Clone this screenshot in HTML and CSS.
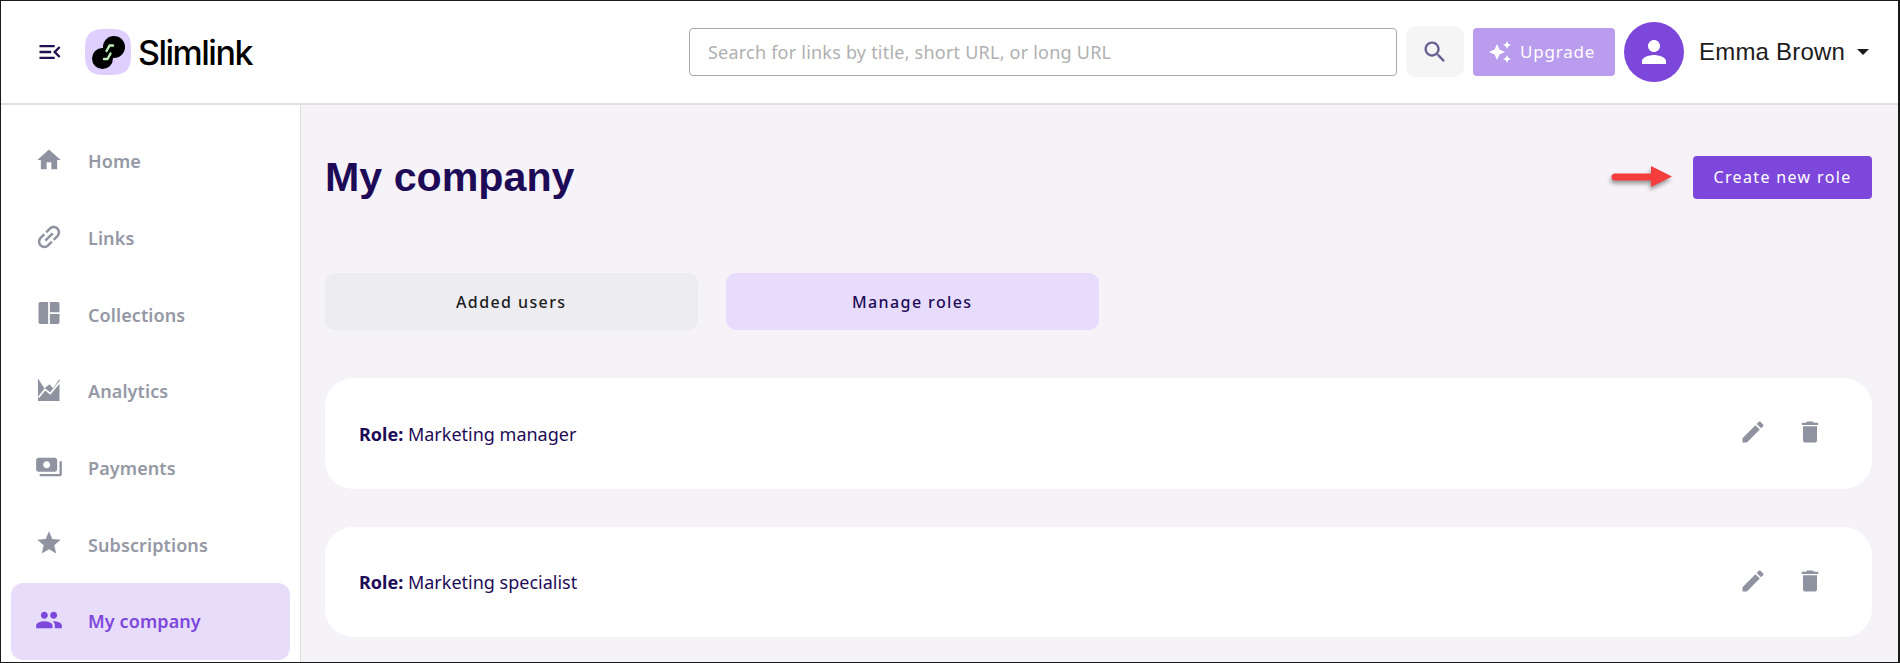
FILE: index.html
```html
<!DOCTYPE html>
<html lang="en">
<head>
<meta charset="utf-8">
<title>Slimlink - My company</title>
<link rel="stylesheet" href="styles.css">
</head>
<body>
<div class="frame">
  <header class="topbar">
    <svg class="menu-icon" viewBox="0 0 24 24"><path d="M3 18h13v-2H3v2zm0-5h10v-2H3v2zm0-7v2h13V6H3zm18 9.590L17.420 12 21 8.410 19.590 7l-5 5 5 5L21 15.590z"/></svg>
    <svg class="logo-mark" viewBox="0 0 46 46">
      <path class="logo-bg" d="M13 0.500C19 -0.500 27 -0.500 33 0.500C40 1.500 45 6 45.500 13C46.200 19 46.200 27 45.500 33C44.500 40 40 44.500 33 45.500C27 46.200 19 46.200 13 45.500C6 44.500 1.500 40 0.500 33C-0.200 27 -0.200 19 0.500 13C1.500 6 6 1.500 13 0.500Z"/>
      <circle class="logo-link" cx="17.500" cy="29.500" r="10.500"/>
      <circle class="logo-link" cx="29" cy="18" r="11"/>
      <path class="logo-s" d="M28 16.500H24.500L21.500 22 M19 30H22.500L25.500 24.500"/>
    </svg>
    <span class="logo-text">Slimlink</span>
    <div class="search-area">
      <div class="search-input">Search for links by title, short URL, or long URL</div>
      <button class="search-btn"><svg viewBox="0 0 24 24"><path d="M15.500 14h-.79l-.28-.27C15.410 12.590 16 11.110 16 9.500 16 5.910 13.090 3 9.500 3S3 5.910 3 9.500 5.910 16 9.500 16c1.610 0 3.090-.59 4.230-1.570l.27.28v.79l5 4.990L20.490 19l-4.990-5zm-6 0C7.010 14 5 11.990 5 9.500S7.010 5 9.500 5 14 7.010 14 9.500 11.990 14 9.500 14z"/></svg></button>
    </div>
    <button class="upgrade-btn"><svg viewBox="0 0 24 24"><path d="M19 9l1.250-2.750L23 5l-2.750-1.250L19 1l-1.250 2.750L15 5l2.750 1.250L19 9zm-7.500.5L9 4 6.500 9.500 1 12l5.500 2.500L9 20l2.500-5.500L17 12l-5.500-2.500zM19 15l-1.250 2.750L15 19l2.750 1.250L19 23l1.250-2.750L23 19l-2.750-1.250L19 15z"/></svg>Upgrade</button>
    <div class="avatar"><svg viewBox="0 0 24 24"><path d="M12 12c2.210 0 4-1.790 4-4s-1.790-4-4-4-4 1.790-4 4 1.790 4 4 4zm0 2c-2.670 0-8 1.340-8 4v2h16v-2c0-2.660-5.330-4-8-4z"/></svg></div>
    <span class="user-name">Emma Brown</span>
    <span class="caret"></span>
  </header>
  <div class="body-row">
    <nav class="sidebar">
      <a class="nav-item"><svg viewBox="0 0 24 24"><path d="M10 20v-6h4v6h5v-8h3L12 3 2 12h3v8z"/></svg>Home</a>
      <a class="nav-item"><svg viewBox="0 0 24 24"><g transform="translate(12 12) scale(1.120) rotate(-45) translate(-12 -12)"><path d="M3.900 12c0-1.710 1.390-3.100 3.100-3.100h4V7H7c-2.760 0-5 2.240-5 5s2.240 5 5 5h4v-1.900H7c-1.710 0-3.100-1.390-3.100-3.100zM8 13h8v-2H8v2zm9-6h-4v1.900h4c1.710 0 3.100 1.390 3.100 3.100s-1.390 3.100-3.100 3.100h-4V17h4c2.760 0 5-2.240 5-5s-2.240-5-5-5z"/></g></svg>Links</a>
      <a class="nav-item"><svg viewBox="0 0 24 24"><path d="M4.500 2.500H11.250V21.500H4.500A1.500 1.500 0 0 1 3 20V4A1.500 1.500 0 0 1 4.500 2.500zM12.750 2.500h6.750A1.500 1.500 0 0 1 21 4V11.250H12.750zM12.750 12.750H21V20A1.500 1.500 0 0 1 19.500 21.500H12.750z"/></svg>Collections</a>
      <a class="nav-item"><svg viewBox="0 0 24 24"><path d="M2.500 21.500V2l5.500 8.500 4.500-3.500 3 3.500L21 2.500V21.500z"/><path class="chart-gap" d="M3 18.500 8.500 11.500 13 15 21 5.500"/></svg>Analytics</a>
      <a class="nav-item"><svg viewBox="0 0 24 24"><path d="M19 14V6c0-1.100-.9-2-2-2H3c-1.100 0-2 .9-2 2v8c0 1.100.9 2 2 2h14c1.100 0 2-.9 2-2zm-9-1c-1.660 0-3-1.340-3-3s1.340-3 3-3 3 1.340 3 3-1.340 3-3 3zm13-6v11c0 1.100-.9 2-2 2H4v-2h17V7h2z"/></svg>Payments</a>
      <a class="nav-item"><svg viewBox="0 0 24 24"><path d="M12 17.270L18.180 21l-1.640-7.030L22 9.240l-7.190-.61L12 2 9.190 8.630 2 9.240l5.460 4.730L5.820 21z"/></svg>Subscriptions</a>
      <a class="nav-item active"><svg viewBox="0 0 24 24"><path d="M16 11c1.660 0 2.990-1.340 2.990-3S17.660 5 16 5c-1.660 0-3 1.340-3 3s1.340 3 3 3zm-8 0c1.660 0 2.990-1.340 2.990-3S9.660 5 8 5C6.340 5 5 6.340 5 8s1.340 3 3 3zm0 2c-2.330 0-7 1.170-7 3.500V19h14v-2.500c0-2.330-4.670-3.500-7-3.500zm8 0c-.29 0-.62.02-.97.05 1.160.84 1.970 1.970 1.970 3.450V19h6v-2.500c0-2.330-4.670-3.500-7-3.500z"/></svg>My company</a>
    </nav>
    <main class="content">
      <div class="title-row">
        <h1>My company</h1>
        <div class="title-actions">
          <svg class="arrow" viewBox="0 0 64 32"><path d="M5 12.500H41V5L62 15.500 41 26V19.500H5a3.500 3.500 0 0 1 0-7z"/></svg>
          <button class="create-btn">Create new role</button>
        </div>
      </div>
      <div class="tabs">
        <div class="tab">Added users</div>
        <div class="tab selected">Manage roles</div>
      </div>
      <section class="role-card">
        <p><strong>Role:</strong> Marketing manager</p>
        <div class="role-actions">
          <svg viewBox="0 0 24 24"><path d="M3 17.250V21h3.750L17.810 9.940l-3.750-3.750L3 17.250zM20.710 7.040c.39-.39.39-1.020 0-1.410l-2.340-2.340c-.39-.39-1.020-.39-1.410 0l-1.830 1.830 3.750 3.750 1.830-1.830z"/></svg>
          <svg viewBox="0 0 24 24"><path d="M6 19c0 1.100.9 2 2 2h8c1.100 0 2-.9 2-2V7H6v12zM19 4h-3.500l-1-1h-5l-1 1H5v2h14V4z"/></svg>
        </div>
      </section>
      <section class="role-card">
        <p><strong>Role:</strong> Marketing specialist</p>
        <div class="role-actions">
          <svg viewBox="0 0 24 24"><path d="M3 17.250V21h3.750L17.810 9.940l-3.750-3.750L3 17.250zM20.710 7.040c.39-.39.39-1.020 0-1.410l-2.340-2.340c-.39-.39-1.020-.39-1.410 0l-1.830 1.830 3.750 3.750 1.830-1.830z"/></svg>
          <svg viewBox="0 0 24 24"><path d="M6 19c0 1.100.9 2 2 2h8c1.100 0 2-.9 2-2V7H6v12zM19 4h-3.500l-1-1h-5l-1 1H5v2h14V4z"/></svg>
        </div>
      </section>
    </main>
  </div>
</div>
</body>
</html>
```
FILE: styles.css
```css
* { box-sizing: border-box; }
html, body { margin: 0; height: 100%; overflow: hidden; background: #1a1a1a; }
body { font-family: "Noto Sans", "Open Sans", sans-serif; }
button { font-family: inherit; border: 0; padding: 0; }

.frame {
  width: 1897px;
  height: 661px;
  margin: 1px 0 0 1px;
  display: flex;
  flex-direction: column;
  background: #f5f3f7;
  overflow: hidden;
}

.topbar {
  height: 104px;
  flex: none;
  display: flex;
  align-items: center;
  background: #fff;
  border-bottom: 2px solid #dfdfdf;
  padding: 0 0 1px 35px;
}
.menu-icon { width: 28px; height: 28px; fill: #21104f; flex: none; margin-right: 21px; }
.logo-mark { width: 46px; height: 46px; flex: none; margin-right: 7px; }
.logo-bg { fill: #dfcfff; }
.logo-link { fill: #000; }
.logo-s { fill: none; stroke: #bdf0b4; stroke-width: 2.400; stroke-linecap: round; stroke-linejoin: round; }
.logo-text { width: 118px; font-family: Inter, sans-serif; font-size: 34px; font-weight: 500; letter-spacing: -1.500px; color: #000; flex: none; margin-top: 2px; }

.search-area { margin-left: 433px; display: flex; align-items: center; gap: 9px; flex: none; }
.search-input {
  width: 708px;
  height: 48px;
  border: 1px solid #a8a8a8;
  border-radius: 4px;
  background: #fff;
  color: #b0b0b0;
  font-size: 18px;
  line-height: 47px;
  padding-left: 18px;
  letter-spacing: 0.220px;
}
.search-btn { width: 58px; height: 51px; border-radius: 10px; background: #f5f5f5; display: flex; align-items: center; justify-content: center; }
.search-btn svg { width: 28px; height: 28px; fill: #6a5f94; }

.upgrade-btn {
  width: 142px;
  height: 48px;
  margin-left: 9px;
  flex: none;
  border-radius: 4px;
  background: #b99ced;
  color: #fff;
  font-size: 17px;
  letter-spacing: 0.800px;
  display: flex;
  align-items: center;
  gap: 8px;
  padding-left: 15px;
}
.upgrade-btn svg { width: 24px; height: 24px; fill: #fff; }

.avatar { width: 60px; height: 60px; margin-left: 9px; border-radius: 50%; background: #7e47db; flex: none; display: flex; align-items: center; justify-content: center; }
.avatar svg { width: 36px; height: 36px; fill: #fff; }
.user-name { font-family: "Liberation Sans", Arial, sans-serif; font-size: 24px; letter-spacing: 0.200px; color: #1c1c1c; margin-left: 15px; flex: none; }
.caret { width: 0; height: 0; border-left: 6px solid transparent; border-right: 6px solid transparent; border-top: 6px solid #1c1c1c; margin-left: 12px; flex: none; }

.body-row { flex: 1; display: flex; min-height: 0; }
.sidebar {
  width: 300px;
  flex: none;
  background: #fff;
  border-right: 1px solid #dcdcdc;
  padding: 18px 10px 0;
  display: flex;
  flex-direction: column;
}
.nav-item {
  height: 76.700px;
  flex: none;
  border-radius: 12px;
  display: flex;
  align-items: center;
  padding-left: 24px;
  color: #9598a5;
  font-size: 18px;
  font-weight: 600;
  letter-spacing: 0.100px;
  gap: 25px;
}
.nav-item svg { width: 28px; height: 28px; fill: #8f93a0; flex: none; margin-top: -3px; }
.nav-item.active { background: #e8dcfb; color: #7e47db; }
.nav-item.active svg { fill: #7e47db; }
.chart-gap { fill: none; stroke: #fff; stroke-width: 1.500; }

.content { flex: 1; min-width: 0; padding: 0 26px 0 24px; }
.title-row { height: 118px; display: flex; align-items: center; justify-content: space-between; padding-top: 26px; }
h1 { margin: 0; font-family: "Liberation Sans", Arial, sans-serif; font-size: 41.200px; font-weight: 700; color: #1e0b57; }
.title-actions { display: flex; align-items: center; gap: 19px; }
.arrow { width: 64px; height: 32px; fill: #f53d3d; filter: drop-shadow(-1px 3px 2px rgba(0,0,0,.4)); }
.create-btn { width: 179px; height: 43px; border-radius: 4px; background: #7e47db; color: #fff; font-size: 16px; letter-spacing: 1.350px; }

.tabs { margin-top: 50px; display: flex; gap: 28.500px; }
.tab { width: 372.500px; height: 57px; border-radius: 10px; background: #edecf1; color: #1c1c1c; font-size: 16px; font-weight: 500; letter-spacing: 1.400px; display: flex; align-items: center; justify-content: center; }
.tab.selected { background: #e8dcfd; color: #1e0b57; }

.role-card { height: 110.500px; margin-top: 48px; border-radius: 28px; background: #fff; display: flex; align-items: center; justify-content: space-between; padding: 0 48px 0 34px; }
.role-card + .role-card { margin-top: 38px; }
.role-card p { margin: 1px 0 0; color: #1e0b57; font-size: 18px; }
.role-card strong { font-weight: 700; }
.role-actions { display: flex; gap: 29px; margin-top: -2px; }
.role-actions svg { width: 28px; height: 28px; fill: #8f93a0; }
```
